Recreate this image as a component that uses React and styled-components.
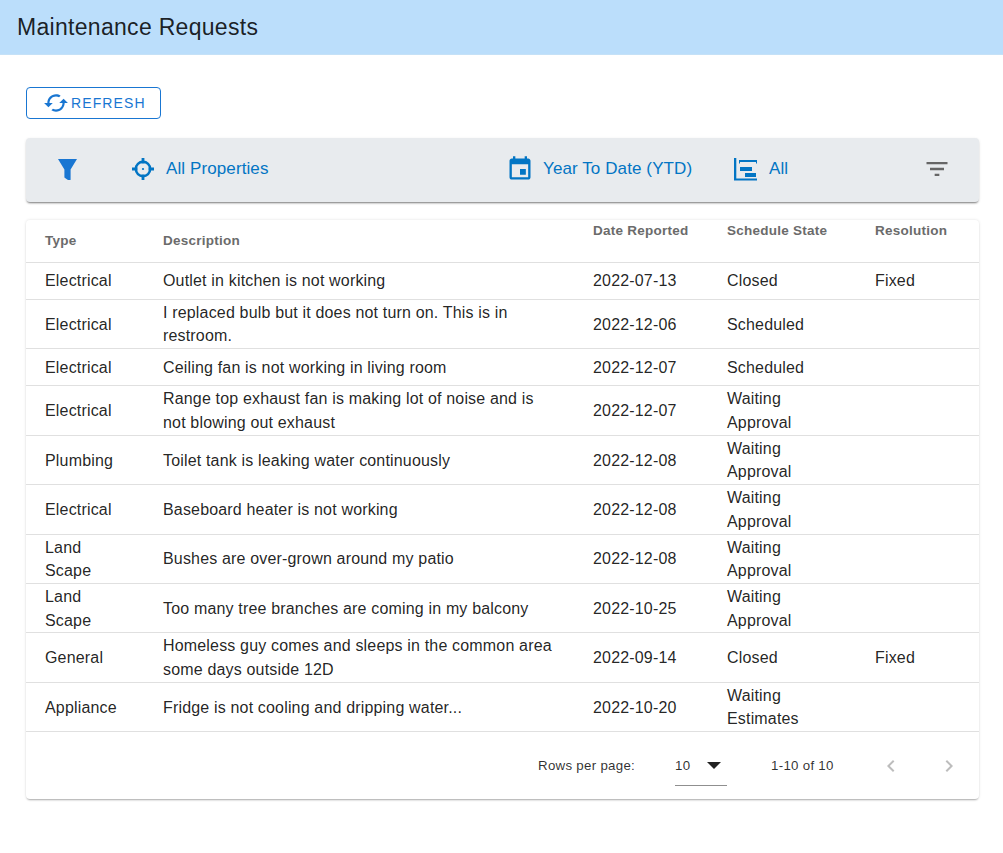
import React from "react";
import styled, { createGlobalStyle } from "styled-components";

const Global = createGlobalStyle`
  html, body { margin: 0; padding: 0; background: #fff; }
  body { font-family: "Liberation Sans", Arial, sans-serif; color: rgba(0,0,0,0.87); }
`;
const Page = styled.div`width: 1003px; min-height: 853px;`;
const Header = styled.header`
  height: 55px; background: #bbdefb; display: flex; align-items: center; padding-left: 17px;
  box-sizing: border-box; border-bottom: 1px solid #c5e1f7;
`;
const Title = styled.h1`margin: 0; font-size: 23px; font-weight: 400; letter-spacing: 0.3px; color: rgba(0,0,0,0.87);`;
const Content = styled.main`padding: 32px 24px 0 26px; display: flex; flex-direction: column;`;
const RefreshButton = styled.button`
  align-self: flex-start; width: 135px; height: 32px; box-sizing: border-box; background: #fff;
  border: 1px solid #1976d2; border-radius: 4px; color: #1976d2; font: 400 14px "Liberation Sans", sans-serif;
  letter-spacing: 1.1px; display: flex; align-items: center; gap: 2px; padding: 0 0 0 16px;
`;
const FilterBar = styled.section`
  margin-top: 19px; height: 64px; box-sizing: border-box; padding-bottom: 2px; background: #e8ebee; border-radius: 4px;
  box-shadow: 0 2px 2px -1px rgba(0,0,0,.45), 0 1px 3px rgba(0,0,0,.12);
  display: flex; align-items: center; color: #0275c4; font-size: 17px;
`;
const FilterItem = styled.div`
  display: flex; align-items: center; flex: none; gap: ${p => p.$gap || 0}px; margin-left: ${p => p.$ml || 0}px;
  width: ${p => (p.$w ? `${p.$w}px` : "auto")}; letter-spacing: .1px;
`;
const Card = styled.section`
  margin-top: 18px; border-radius: 4px; background: #fff;
  box-shadow: 0 2px 2px -1px rgba(0,0,0,.3), 0 0 3px rgba(0,0,0,.13);
`;
const Table = styled.table`width: 100%; border-collapse: collapse; table-layout: fixed;`;
const Head = styled.th`
  height: 42px; box-sizing: border-box; padding: ${p => (p.$top ? "3px 0 0 0" : "0")};
  vertical-align: ${p => (p.$top ? "top" : "middle")};
  text-align: left; font-size: 13.5px; font-weight: 700; color: #6b6b6b; letter-spacing: .25px;
  border-bottom: 1px solid #e0e0e0;
  &:first-child { padding-left: 19px; }
`;
const Cell = styled.td`
  box-sizing: border-box; padding: 1px 38px 0 0; font-size: 16px; line-height: 23.7px; color: rgba(0,0,0,.87);
  height: 37.2px; letter-spacing: .17px; border-bottom: 1px solid #e0e0e0;
  &:first-child { padding-left: 19px; }
`;
const Pager = styled.footer`
  height: 67px; display: flex; align-items: center; font-size: 13.3px; color: rgba(0,0,0,.82); letter-spacing: .28px;
`;
const PagerLabel = styled.span`margin-left: 512px; width: 137px;`;
const PageSelect = styled.div`
  width: 52px; height: 38px; margin-top: 3px; box-sizing: border-box; border-bottom: 1px solid #8f8f8f;
  display: flex; align-items: center; justify-content: space-between; padding: 0 6px 2px 0; font-size: 13.3px;
`;
const Range = styled.span`margin-left: 44px; width: 108px;`;
const Chevrons = styled.div`display: flex; gap: 33.5px;`;

const rows = [
  ["Electrical", "Outlet in kitchen is not working", "2022-07-13", "Closed", "Fixed"],
  ["Electrical", "I replaced bulb but it does not turn on. This is in restroom.", "2022-12-06", "Scheduled", ""],
  ["Electrical", "Ceiling fan is not working in living room", "2022-12-07", "Scheduled", ""],
  ["Electrical", "Range top exhaust fan is making lot of noise and is not blowing out exhaust", "2022-12-07", "Waiting Approval", ""],
  ["Plumbing", "Toilet tank is leaking water continuously", "2022-12-08", "Waiting Approval", ""],
  ["Electrical", "Baseboard heater is not working", "2022-12-08", "Waiting Approval", ""],
  ["Land Scape", "Bushes are over-grown around my patio", "2022-12-08", "Waiting Approval", ""],
  ["Land Scape", "Too many tree branches are coming in my balcony", "2022-10-25", "Waiting Approval", ""],
  ["General", "Homeless guy comes and sleeps in the common area some days outside 12D", "2022-09-14", "Closed", "Fixed"],
  ["Appliance", "Fridge is not cooling and dripping water...", "2022-10-20", "Waiting Estimates", ""],
];
const Icon = ({ d, size = 24, fill = "currentColor" }) => (
  <svg width={size} height={size} viewBox="0 0 24 24" fill={fill}><path d={d} /></svg>
);
const FunnelIcon = () => (
  <svg width="19" height="21" viewBox="0 0 19 21" fill="#1976d2">
    <path d="M0 0h19L12.6 10.5V20.4q0 .6-.6.6H10Q8 20 6.4 18.6V10.5z" />
  </svg>
);
const TargetIcon = () => (
  <svg width="24" height="24" viewBox="0 0 24 24" fill="none" stroke="currentColor">
    <circle cx="12" cy="12" r="7.2" strokeWidth="2.4" />
    <path d="M12 1v5.5M12 17.5V23M1 12h5.5M17.5 12H23" strokeWidth="2.8" />
    <circle cx="12" cy="12" r="1.1" fill="currentColor" stroke="none" />
  </svg>
);
const GanttIcon = () => (
  <svg width="23" height="23" viewBox="0 0 23 23" fill="currentColor">
    <path d="M0 0h2.3v20.5H23v2H0zM5 2h18v3.5h-1V4H6v1.5H5zM6 9h12v4H6zM11 15h11v4H11z" />
  </svg>
);

export default function App() {
  return (
    <Page>
      <Global />
      <Header><Title>Maintenance Requests</Title></Header>
      <Content>
        <RefreshButton>
          <Icon size={26} d="m19 8-4 4h3c0 3.31-2.69 6-6 6-1.01 0-1.97-.25-2.8-.7l-1.46 1.46C8.97 19.54 10.43 20 12 20c4.42 0 8-3.58 8-8h3l-4-4zM6 12c0-3.31 2.69-6 6-6 1.01 0 1.97.25 2.8.7l1.46-1.46C15.03 4.46 13.57 4 12 4c-4.42 0-8 3.58-8 8H1l4 4 4-4H6z" />
          REFRESH
        </RefreshButton>
        <FilterBar>
          <FilterItem $ml={32}><FunnelIcon /></FilterItem>
          <FilterItem $ml={54} $w={374.5} $gap={11}><TargetIcon />All Properties</FilterItem>
          <FilterItem $w={228.5} $gap={9.5}><Icon size={28} d="M17 12h-5v5h5v-5zM16 1v2H8V1H6v2H5c-1.11 0-1.99.9-1.99 2L3 19c0 1.1.89 2 2 2h14c1.1 0 2-.9 2-2V5c0-1.1-.9-2-2-2h-1V1h-2zm3 18H5V8h14v11z" />Year To Date (YTD)</FilterItem>
          <FilterItem $w={189} $gap={12}><GanttIcon />All</FilterItem>
          <FilterItem><Icon size={28} fill="#666" d="M10 18h4v-2h-4v2zM3 6v2h18V6H3zm3 7h12v-2H6v2z" /></FilterItem>
        </FilterBar>
        <Card>
          <Table>
            <colgroup><col style={{ width: 137 }} /><col style={{ width: 430 }} /><col style={{ width: 134 }} /><col style={{ width: 148 }} /><col /></colgroup>
            <thead><tr>
              <Head>Type</Head><Head>Description</Head><Head $top>Date Reported</Head><Head $top>Schedule State</Head><Head $top>Resolution</Head>
            </tr></thead>
            <tbody>
              {rows.map((r, i) => <tr key={i}>{r.map((c, j) => <Cell key={j}>{c}</Cell>)}</tr>)}
            </tbody>
          </Table>
          <Pager>
            <PagerLabel>Rows per page:</PagerLabel>
            <PageSelect>10<svg width="14" height="7" viewBox="0 0 14 7"><path d="M0 0h14L7 7z" fill="#222" /></svg></PageSelect>
            <Range>1-10 of 10</Range>
            <Chevrons>
              <Icon size={24} fill="#bdbdbd" d="M15.41 7.41 14 6l-6 6 6 6 1.41-1.41L10.83 12z" />
              <Icon size={24} fill="#bdbdbd" d="M10 6 8.59 7.41 13.17 12l-4.58 4.59L10 18l6-6z" />
            </Chevrons>
          </Pager>
        </Card>
      </Content>
    </Page>
  );
}
